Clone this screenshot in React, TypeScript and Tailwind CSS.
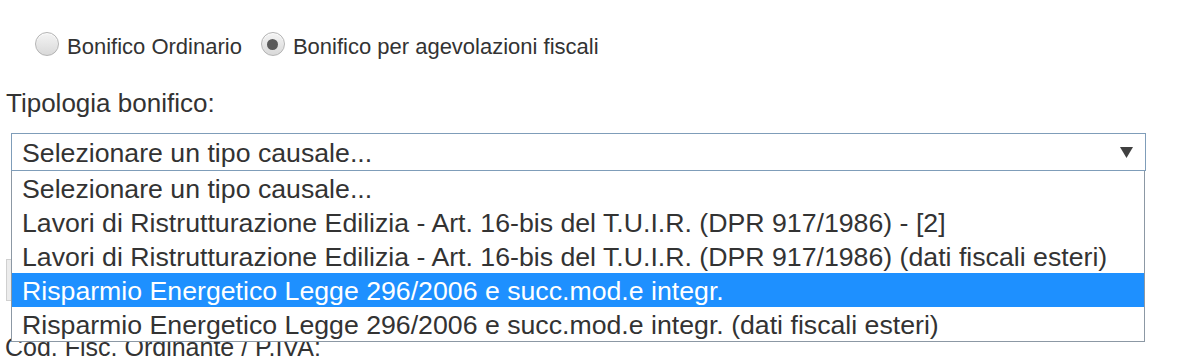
import React, { useState } from 'react';

const options = [
  'Selezionare un tipo causale...',
  'Lavori di Ristrutturazione Edilizia - Art. 16-bis del T.U.I.R. (DPR 917/1986) - [2]',
  'Lavori di Ristrutturazione Edilizia - Art. 16-bis del T.U.I.R. (DPR 917/1986) (dati fiscali esteri)',
  'Risparmio Energetico Legge 296/2006 e succ.mod.e integr.',
  'Risparmio Energetico Legge 296/2006 e succ.mod.e integr. (dati fiscali esteri)',
];

const Radio = ({ checked, label }: { checked: boolean; label: string }) => (
  <label className="flex items-center gap-[8px]">
    <span className="flex h-[24px] w-[24px] items-center justify-center rounded-full border border-[#b4b4b4] bg-gradient-to-b from-[#f4f4f4] to-[#d9d9d9] shadow-[inset_0_1px_1px_rgba(255,255,255,0.8)]">
      {checked && <span className="h-[11px] w-[11px] rounded-full bg-[#5a5a5a]" />}
    </span>
    <span className="text-[22px] leading-none text-[#333] pt-[6px]">{label}</span>
  </label>
);

const App = () => {
  const [selected] = useState(3);

  return (
    <div className="h-[360px] w-[1187px] overflow-hidden bg-white font-['Liberation_Sans',Arial,sans-serif] text-[#333]">
      {/* Tipo bonifico */}
      <div className="flex items-center gap-[19px] pl-[35px] pt-[30px]">
        <Radio checked={false} label="Bonifico Ordinario" />
        <Radio checked={true} label="Bonifico per agevolazioni fiscali" />
      </div>

      <div className="pl-[6px] pt-[32px] text-[26px] leading-none">Tipologia bonifico:</div>

      {/* Select + lista aperta */}
      <div className="relative ml-[11px] mt-[17px] w-[1135px]">
        <div className="flex h-[38px] items-center justify-between border border-[#7f9db9] bg-white pl-[10px] pr-[12px]">
          <span className="pt-[2px] text-[26.7px] leading-none text-[#333]">{options[0]}</span>
          <svg width="13" height="11" viewBox="0 0 13 11">
            <path d="M0 0H13L6.5 11Z" fill="#404040" />
          </svg>
        </div>
        <div className="absolute left-0 top-[38px] z-10 w-[1134px] border border-t-0 border-[#8c98a4] bg-white">
          {options.map((o, i) => (
            <div
              key={i}
              className={
                i === selected
                  ? 'flex h-[34px] items-center bg-[#1e90ff] pl-[10px] pt-[2px] text-[26.7px] leading-none text-white'
                  : 'flex h-[34px] items-center pl-[10px] pt-[2px] text-[26.7px] leading-none text-[#333]'
              }
            >
              {o}
            </div>
          ))}
        </div>
      </div>

      {/* Campi sotto la lista */}
      <div className="ml-[6px] mt-[88px] h-[42px] w-[200px] border border-[#d0d0d0] bg-[#ececec]" />
      <div className="pl-[5px] pt-[34px] text-[25px] leading-none">Cod. Fisc. Ordinante / P.IVA:</div>
    </div>
  );
};

export default App;
